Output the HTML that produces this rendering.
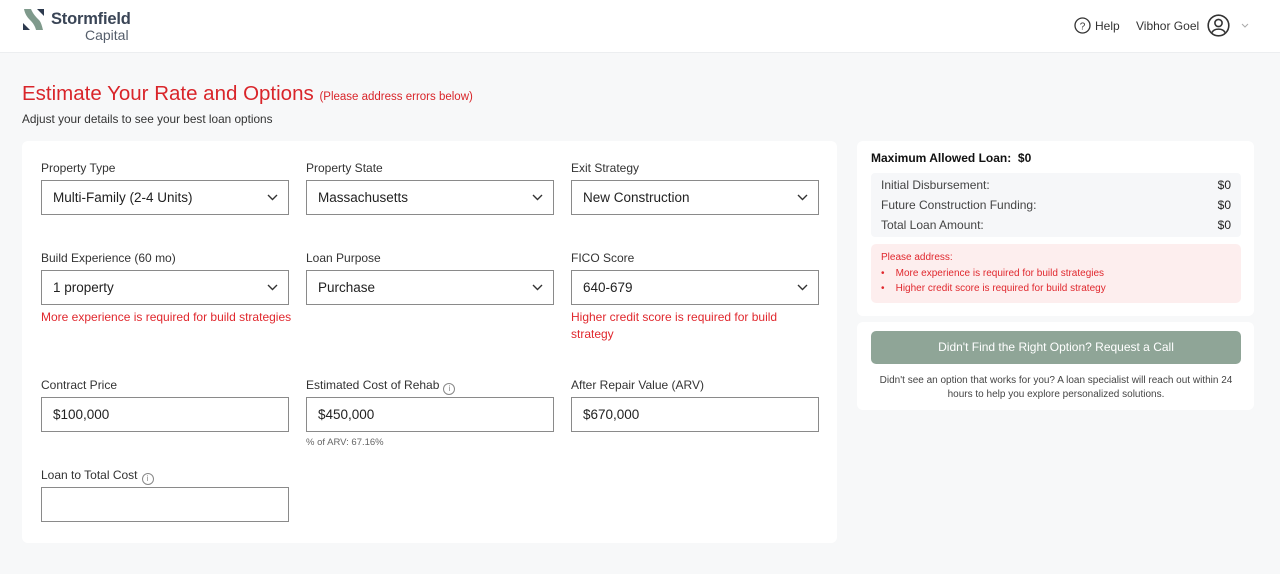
<!DOCTYPE html>
<html><head><style>
*{box-sizing:border-box;margin:0;padding:0}
body{width:1280px;height:574px;background:#f7f8f9;font-family:"Liberation Sans",sans-serif;color:#222;position:relative;overflow:hidden}
.hdr{position:absolute;left:0;top:0;width:1280px;height:53px;background:#fff;border-bottom:1px solid #eceef0}
.abs{position:absolute}
.card{position:absolute;background:#fff;border-radius:6px}
.lbl{position:absolute;font-size:12px;color:#333}
.sel{position:absolute;width:248px;height:35px;border:1px solid #8a8a8a;background:#fff;font-size:13.5px;color:#222;padding:9px 11px}
.sel svg{position:absolute;right:10px;top:13px}
.err{position:absolute;font-size:12px;color:#e0282e;line-height:17px;width:230px}
.info{display:inline-block;width:12px;height:12px;border:1px solid #888;border-radius:50%;font-size:8px;text-align:center;line-height:10px;color:#888;vertical-align:-2px;margin-left:4px}
</style></head><body>
<div class="hdr">
<svg class="abs" style="left:22px;top:8px" width="24" height="23" viewBox="0 0 24 23"><path d="M2 1 L9 1 C11 6 14 9 17 12 C19 14 20 18 21 22 L14 22 C13 18 11 15 8 12 C5 9 3 6 2 1 Z" fill="#7f9a8c"/><path d="M15 1 L22 1 L22 8 Z" fill="#2d3a4e"/><path d="M1 15 L1 22 L8 22 Z" fill="#2d3a4e"/></svg>
<div class="abs" style="left:51px;top:10px;font-size:16.5px;color:#3a4556;font-weight:bold;letter-spacing:-0.2px">Stormfield</div>
<div class="abs" style="left:85px;top:27px;font-size:14px;color:#555e6b">Capital</div>
<svg class="abs" style="left:1074px;top:17px" width="17" height="17" viewBox="0 0 17 17"><circle cx="8.5" cy="8.5" r="7.5" fill="none" stroke="#333" stroke-width="1.3"/><text x="8.5" y="12.5" font-size="10" text-anchor="middle" font-family="Liberation Sans" fill="#333">?</text></svg>
<div class="abs" style="left:1095px;top:19px;font-size:12px;color:#333">Help</div>
<div class="abs" style="left:1136px;top:19px;font-size:12px;color:#333">Vibhor Goel</div>
<svg class="abs" style="left:1207px;top:14px" width="23" height="23" viewBox="0 0 23 23"><circle cx="11.5" cy="11.5" r="10.3" fill="none" stroke="#333" stroke-width="1.6"/><circle cx="11.5" cy="9" r="3.6" fill="none" stroke="#333" stroke-width="1.6"/><path d="M5 18.5 C7 14 16 14 18 18.5" fill="none" stroke="#333" stroke-width="1.6"/></svg>
<svg class="abs" style="left:1241px;top:23px" width="8" height="5" viewBox="0 0 8 5"><path d="M1 1 L4 4 L7 1" fill="none" stroke="#aaa" stroke-width="1"/></svg>
</div>
<div class="abs" style="left:22px;top:82px;font-size:20.5px;color:#d9252a">Estimate Your Rate and Options <span style="font-size:11.5px">(Please address errors below)</span></div>
<div class="abs" style="left:22px;top:112px;font-size:11.8px;color:#333">Adjust your details to see your best loan options</div>

<div class="card" style="left:22px;top:141px;width:815px;height:402px"></div>
<div class="lbl" style="left:41px;top:161px">Property Type</div>
<div class="lbl" style="left:306px;top:161px">Property State</div>
<div class="lbl" style="left:571px;top:161px">Exit Strategy</div>
<div class="sel" style="left:41px;top:180px">Multi-Family (2-4 Units)<svg width="11" height="7" viewBox="0 0 11 7"><path d="M1 1 L5.5 5.5 L10 1" fill="none" stroke="#333" stroke-width="1.4"/></svg></div>
<div class="sel" style="left:306px;top:180px">Massachusetts<svg width="11" height="7" viewBox="0 0 11 7"><path d="M1 1 L5.5 5.5 L10 1" fill="none" stroke="#333" stroke-width="1.4"/></svg></div>
<div class="sel" style="left:571px;top:180px">New Construction<svg width="11" height="7" viewBox="0 0 11 7"><path d="M1 1 L5.5 5.5 L10 1" fill="none" stroke="#333" stroke-width="1.4"/></svg></div>
<div class="lbl" style="left:41px;top:251px">Build Experience (60 mo)</div>
<div class="lbl" style="left:306px;top:251px">Loan Purpose</div>
<div class="lbl" style="left:571px;top:251px">FICO Score</div>
<div class="sel" style="left:41px;top:270px">1 property<svg width="11" height="7" viewBox="0 0 11 7"><path d="M1 1 L5.5 5.5 L10 1" fill="none" stroke="#333" stroke-width="1.4"/></svg></div>
<div class="sel" style="left:306px;top:270px">Purchase<svg width="11" height="7" viewBox="0 0 11 7"><path d="M1 1 L5.5 5.5 L10 1" fill="none" stroke="#333" stroke-width="1.4"/></svg></div>
<div class="sel" style="left:571px;top:270px">640-679<svg width="11" height="7" viewBox="0 0 11 7"><path d="M1 1 L5.5 5.5 L10 1" fill="none" stroke="#333" stroke-width="1.4"/></svg></div>
<div class="err" style="left:41px;top:309px;width:262px">More experience is required for build strategies</div>
<div class="err" style="left:571px;top:309px;width:215px">Higher credit score is required for build strategy</div>
<div class="lbl" style="left:41px;top:378px">Contract Price</div>
<div class="lbl" style="left:306px;top:378px">Estimated Cost of Rehab<span class="info">i</span></div>
<div class="lbl" style="left:571px;top:378px">After Repair Value (ARV)</div>
<div class="sel" style="left:41px;top:397px">$100,000</div>
<div class="sel" style="left:306px;top:397px">$450,000</div>
<div class="sel" style="left:571px;top:397px">$670,000</div>
<div class="abs" style="left:306px;top:437px;font-size:9.5px;color:#666">% of ARV: 67.16%</div>
<div class="lbl" style="left:41px;top:468px">Loan to Total Cost<span class="info">i</span></div>
<div class="sel" style="left:41px;top:487px"></div>

<div class="card" style="left:857px;top:141px;width:397px;height:175px"></div>
<div class="abs" style="left:871px;top:151px;font-size:12px;font-weight:bold;color:#111">Maximum Allowed Loan:&nbsp; $0</div>
<div class="abs" style="left:871px;top:173px;width:370px;height:64px;background:#f6f7f9;border-radius:4px;font-size:12px;color:#444">
<div class="abs" style="left:10px;top:5px">Initial Disbursement:</div><div class="abs" style="right:10px;top:5px;color:#222">$0</div>
<div class="abs" style="left:10px;top:25px">Future Construction Funding:</div><div class="abs" style="right:10px;top:25px;color:#222">$0</div>
<div class="abs" style="left:10px;top:45px">Total Loan Amount:</div><div class="abs" style="right:10px;top:45px;color:#222">$0</div>
</div>
<div class="abs" style="left:871px;top:244px;width:370px;height:59px;background:#fdeeee;border-radius:5px;font-size:10px;color:#e0282e">
<div class="abs" style="left:10px;top:8px">Please address:</div>
<div class="abs" style="left:10px;top:24px">•&nbsp;&nbsp;&nbsp; More experience is required for build strategies</div>
<div class="abs" style="left:10px;top:39px">•&nbsp;&nbsp;&nbsp; Higher credit score is required for build strategy</div>
</div>
<div class="card" style="left:857px;top:322px;width:397px;height:88px"></div>
<div class="abs" style="left:871px;top:331px;width:370px;height:33px;background:#8fa597;border-radius:5px;color:#fff;font-size:12px;text-align:center;line-height:33px">Didn't Find the Right Option? Request a Call</div>
<div class="abs" style="left:871px;top:374px;width:370px;text-align:center;font-size:10px;color:#444;line-height:14px">Didn't see an option that works for you? A loan specialist will reach out within 24 hours to help you explore personalized solutions.</div>
</body></html>
